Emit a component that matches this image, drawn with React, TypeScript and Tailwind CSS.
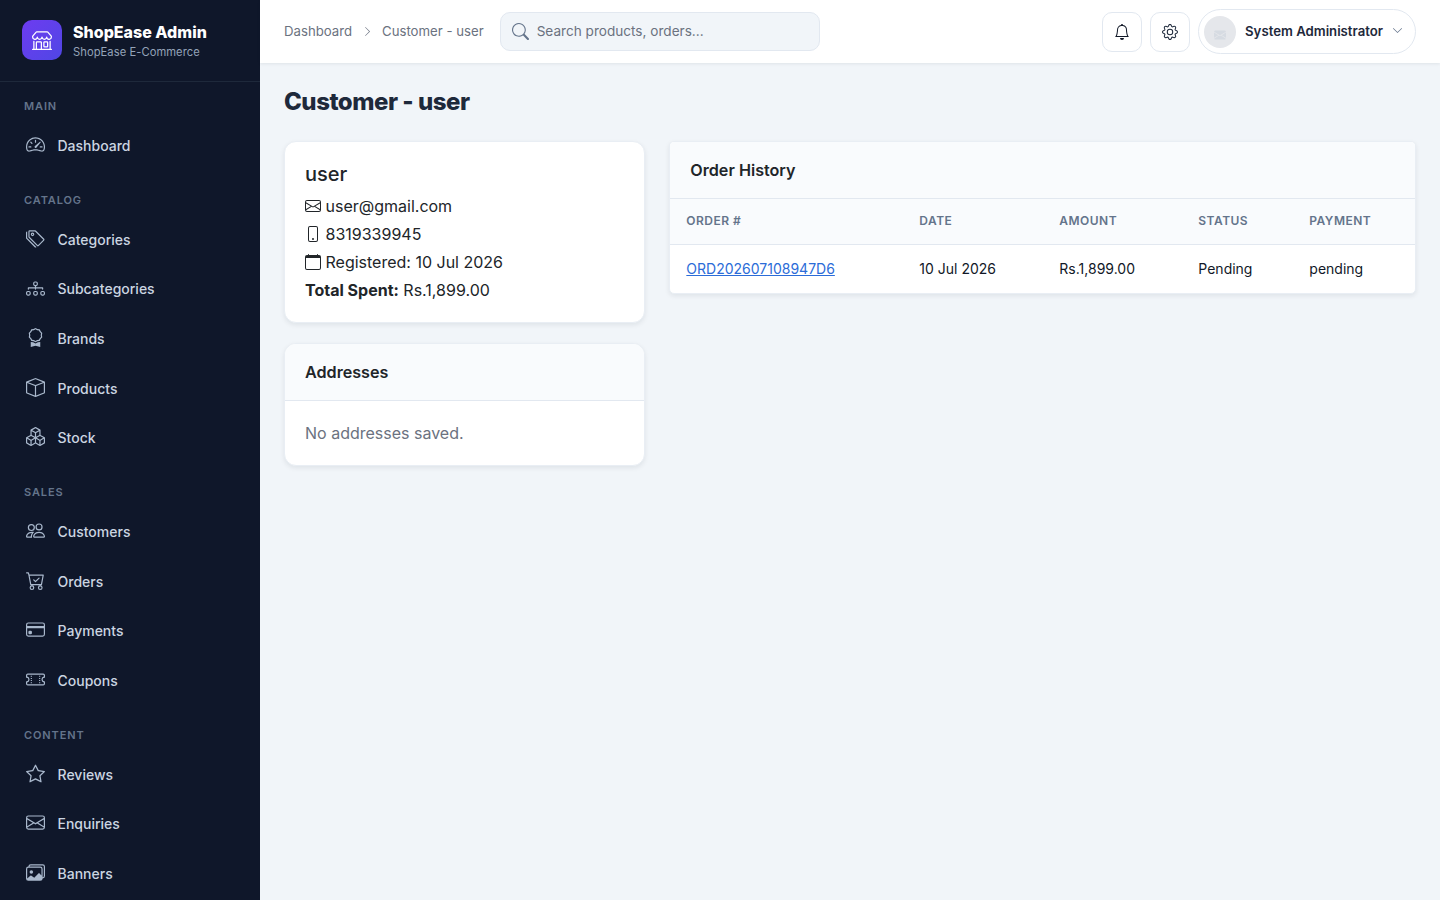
import {
  BsAward, BsBell, BsBox, BsBoxes, BsCalendar, BsCartCheck, BsChevronDown, BsChevronRight, BsCreditCard,
  BsDiagram3, BsEnvelope, BsEnvelopeFill, BsGear, BsImages, BsPeople, BsPhone, BsSearch, BsShop, BsSpeedometer2, BsStar,
  BsTags, BsTicketPerforated,
} from 'react-icons/bs'

const navGroups = [
  { title: 'Main', items: [{ label: 'Dashboard', icon: BsSpeedometer2 }] },
  {
    title: 'Catalog',
    items: [
      { label: 'Categories', icon: BsTags },
      { label: 'Subcategories', icon: BsDiagram3 },
      { label: 'Brands', icon: BsAward },
      { label: 'Products', icon: BsBox },
      { label: 'Stock', icon: BsBoxes },
    ],
  },
  {
    title: 'Sales',
    items: [
      { label: 'Customers', icon: BsPeople },
      { label: 'Orders', icon: BsCartCheck },
      { label: 'Payments', icon: BsCreditCard },
      { label: 'Coupons', icon: BsTicketPerforated },
    ],
  },
  {
    title: 'Content',
    items: [
      { label: 'Reviews', icon: BsStar },
      { label: 'Enquiries', icon: BsEnvelope },
      { label: 'Banners', icon: BsImages },
    ],
  },
]

function Sidebar() {
  return (
    <aside className="w-[260px] shrink-0 h-screen overflow-hidden bg-[#0f172a] flex flex-col">
      <div className="h-[82px] shrink-0 px-[22px] pb-[2px] flex items-center gap-[11px] border-b border-[#1e293b]">
        <div className="w-10 h-10 rounded-[10px] bg-gradient-to-br from-[#6d3bf0] to-[#4f46e5] flex items-center justify-center text-white">
          <BsShop className="text-[20px]" />
        </div>
        <div className="pt-1">
          <div className="text-[16px] leading-[20px] font-extrabold text-white">ShopEase Admin</div>
          <div className="text-[11.2px] leading-[20px] tracking-[0.005em] text-[#94a3b8]">ShopEase E-Commerce</div>
        </div>
      </div>
      <nav className="pt-[13px]">
        {navGroups.map((group) => (
          <div key={group.title} className="mb-[18.2px]">
            <div className="px-6 pt-[3px] h-[26px] text-[11px] leading-4 font-semibold tracking-[0.08em] uppercase text-[#64748b]">
              {group.title}
            </div>
            {group.items.map((item) => (
              <a key={item.label} className="flex items-center gap-[12.5px] px-[26px] py-[14px] text-[14px] leading-[21.6px] font-medium text-[#cbd5e1]">
                <item.icon className="text-[19px] w-[19px] shrink-0 text-[#a9b8cc] -translate-y-px" />
                {item.label}
              </a>
            ))}
          </div>
        ))}
      </nav>
    </aside>
  )
}

function Topbar() {
  return (
    <header className="h-[63px] shrink-0 bg-white shadow-[0_1px_3px_rgba(15,23,42,0.08)] px-6 flex items-center">
      <div className="flex items-center text-[13.2px] text-[#6b7280]">
        <span>Dashboard</span>
        <BsChevronRight className="text-[11px] mx-[9.5px]" />
        <span>Customer - user</span>
      </div>
      <div className="ml-4 w-[320px] h-[39px] rounded-[10px] bg-[#f1f5f9] border border-[#e2e8f0] flex items-center px-[11px] gap-2">
        <BsSearch className="text-[17px] text-[#64748b]" />
        <span className="text-[13.6px] text-[#6b7280]">Search products, orders...</span>
      </div>
      <div className="ml-auto flex items-center gap-2">
        <button className="w-10 h-10 rounded-[10px] border border-[#e2e8f0] flex items-center justify-center text-[#111827]">
          <BsBell className="text-[16px]" />
        </button>
        <button className="w-10 h-10 rounded-[10px] border border-[#e2e8f0] flex items-center justify-center text-[#1e293b]">
          <BsGear className="text-[16px]" />
        </button>
        <button className="h-[45px] rounded-full border border-[#e2e8f0] flex items-center pl-[5px] pr-3 gap-[9px]">
          <span className="w-8 h-8 rounded-full bg-[#e5e7eb] flex items-center justify-center">
            <BsEnvelopeFill className="text-[12px] text-[#d6dbe2] translate-y-[3px]" />
          </span>
          <span className="text-[13.2px] font-semibold text-[#1e293b]">System Administrator</span>
          <BsChevronDown className="text-[11px] text-[#64748b] -translate-y-px" />
        </button>
      </div>
    </header>
  )
}

function InfoLine({ icon: Icon, children }: any) {
  return (
    <div className="flex items-center gap-[4.5px] h-6 mb-1 text-[16px] text-[#212529]">
      <Icon className="text-[16px] shrink-0" />
      <span>{children}</span>
    </div>
  )
}

export default function App() {
  return (
    <div className="flex h-screen overflow-hidden bg-[#f1f5f9] font-['Inter',sans-serif] text-[#212529]">
      <Sidebar />
      <div className="flex-1 min-w-0 flex flex-col">
        <Topbar />
        <main className="p-6 flex-1">
          <h1 className="text-[24px] leading-[29px] font-extrabold text-[#1e293b] mb-[25px] tracking-[-0.02em]">Customer - user</h1>
          <div className="grid grid-cols-3 gap-6">
            <div className="flex flex-col gap-5">
              <div className="bg-white rounded-xl border border-[#e9eef4] shadow-[0_2px_5px_rgba(15,23,42,0.08)] p-5">
                <div className="text-[20px] leading-[24px] font-medium mb-2 text-[#212529]">user</div>
                <InfoLine icon={BsEnvelope}>user@gmail.com</InfoLine>
                <InfoLine icon={BsPhone}>8319339945</InfoLine>
                <InfoLine icon={BsCalendar}>Registered: 10 Jul 2026</InfoLine>
                <div className="h-6 text-[16px] leading-6">
                  <strong className="font-bold">Total Spent:</strong> Rs.1,899.00
                </div>
              </div>
              <div className="bg-white rounded-xl border border-[#e9eef4] shadow-[0_2px_5px_rgba(15,23,42,0.08)] overflow-hidden">
                <div className="h-[57px] px-5 flex items-center bg-[#f9fbfd] border-b border-[#e2e8f0] text-[16.15px] font-semibold">Addresses</div>
                <div className="p-5 text-[16px] leading-6 text-[#6b7280]">No addresses saved.</div>
              </div>
            </div>
            <div className="col-span-2 self-start bg-white rounded-[5px] border border-[#e9eef4] shadow-[0_2px_5px_rgba(15,23,42,0.08)] overflow-hidden">
              <div className="h-[57px] px-5 flex items-center bg-[#f9fbfd] border-b border-[#e2e8f0] text-[16.15px] font-semibold">Order History</div>
              <table className="w-full table-fixed text-[14px] text-[#111827]">
                <thead>
                  <tr className="h-[45px] bg-[#f9fbfd] border-b border-[#e2e8f0] text-left text-[12px] font-semibold uppercase tracking-[0.04em] text-[#64748b]">
                    <th className="w-[233px] px-4 pb-px font-semibold">Order #</th>
                    <th className="w-[140px] px-4 pb-px font-semibold">Date</th>
                    <th className="w-[139px] px-4 pb-px font-semibold">Amount</th>
                    <th className="w-[111px] px-4 pb-px font-semibold">Status</th>
                    <th className="px-4 pb-px font-semibold">Payment</th>
                  </tr>
                </thead>
                <tbody>
                  <tr className="h-[49px]">
                    <td className="px-4"><a className="text-[#2b6cd8] underline">ORD202607108947D6</a></td>
                    <td className="px-4">10 Jul 2026</td>
                    <td className="px-4">Rs.1,899.00</td>
                    <td className="px-4">Pending</td>
                    <td className="px-4">pending</td>
                  </tr>
                </tbody>
              </table>
            </div>
          </div>
        </main>
      </div>
    </div>
  )
}
